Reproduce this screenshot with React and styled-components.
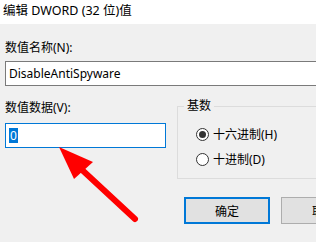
import React from "react";
import styled, { createGlobalStyle } from "styled-components";

const Global = createGlobalStyle`
  html, body { margin: 0; padding: 0; background: #f0f0f0; }
  body { width: 316px; height: 242px; overflow: hidden; }
  #root { width: 316px; height: 242px; overflow: hidden; position: relative; }
`;

const FONT = `"Noto Sans", "Noto Sans CJK SC", sans-serif`;

const Window = styled.div`
  width: 316px;
  height: 242px;
  position: relative;
  background: #f0f0f0;
  font-family: ${FONT};
  font-size: 12px;
  color: #000;
  overflow: hidden;
`;

const TitleBar = styled.div`
  height: 24px;
  background: #ffffff;
  padding: 2px 0 0 3px;
  box-sizing: border-box;
  font-size: 12.5px;
  line-height: 17px;
  white-space: nowrap;
`;

const Content = styled.div`
  padding: 0 0 0 5px;
  display: flex;
  flex-direction: column;
`;

const Label = styled.div`
  line-height: 16px;
  margin-top: ${(p) => p.$mt}px;
  white-space: nowrap;
`;

const TextBox = styled.div`
  box-sizing: border-box;
  height: 25px;
  width: ${(p) => p.$w};
  margin-top: ${(p) => p.$mt}px;
  background: #fff;
  border: 1px solid ${(p) => (p.$focus ? "#0078d7" : "#7a7a7a")};
  display: flex;
  align-items: center;
  padding-left: 3px;
  white-space: nowrap;
`;

const Selected = styled.span`
  background: #0078d7;
  color: #fff;
  line-height: 15px;
  padding: 0 1px;
`;

const Row = styled.div`
  display: flex;
  align-items: flex-start;
`;

const LeftCol = styled.div`
  display: flex;
  flex-direction: column;
  width: 160px;
`;

const Group = styled.div`
  position: relative;
  margin-left: 12px;
  margin-top: 20px;
  width: 160px;
  height: 73px;
  border: 1px solid #dcdcdc;
  border-right: none;
  box-sizing: border-box;
  display: flex;
  flex-direction: column;
  padding: 19px 0 0 18px;
  gap: 9px;
`;

const Legend = styled.span`
  position: absolute;
  top: -9px;
  left: 6px;
  padding: 0 3px;
  background: #f0f0f0;
  line-height: 16px;
`;

const Radio = styled.div`
  display: flex;
  align-items: center;
  gap: 4px;
  height: 16px;
  white-space: nowrap;
`;

const Circle = styled.span`
  width: 13px;
  height: 13px;
  box-sizing: border-box;
  border-radius: 50%;
  border: 1px solid #333;
  background: #fff;
  display: flex;
  align-items: center;
  justify-content: center;
  &::after {
    content: "";
    width: 7px;
    height: 7px;
    border-radius: 50%;
    background: ${(p) => (p.$on ? "#333" : "transparent")};
  }
`;

const Buttons = styled.div`
  display: flex;
  gap: 11px;
  margin-left: 179px;
  margin-top: 18px;
`;

const Button = styled.div`
  flex: none;
  box-sizing: border-box;
  width: 86px;
  height: 27px;
  background: #e1e1e1;
  border: ${(p) => (p.$default ? "2px solid #0078d7" : "1px solid #adadad")};
  display: flex;
  align-items: center;
  justify-content: center;
  white-space: nowrap;
`;

const Arrow = styled.svg`
  position: absolute;
  left: 0;
  top: 0;
  pointer-events: none;
`;

export default function App() {
  return (
    <>
      <Global />
      <Window>
        <TitleBar>编辑 DWORD (32 位)值</TitleBar>
        <Content>
          <Label $mt={16}>数值名称(N):</Label>
          <TextBox $mt={5} $w="330px">DisableAntiSpyware</TextBox>
          <Row>
            <LeftCol>
              <Label $mt={14}>数值数据(V):</Label>
              <TextBox $mt={7} $w="161px" $focus>
                <Selected>0</Selected>
              </TextBox>
            </LeftCol>
            <Group>
              <Legend>基数</Legend>
              <Radio>
                <Circle $on />
                十六进制(H)
              </Radio>
              <Radio>
                <Circle />
                十进制(D)
              </Radio>
            </Group>
          </Row>
          <Buttons>
            <Button $default>确定</Button>
            <Button>取消</Button>
          </Buttons>
        </Content>
        <Arrow width="316" height="242" viewBox="0 0 316 242">
          <line x1="135" y1="219" x2="80" y2="168" stroke="#ff0000" strokeWidth="6" strokeLinecap="round" />
          <polygon points="59,147 93,162 74,179" fill="#ff0000" />
        </Arrow>
      </Window>
    </>
  );
}
